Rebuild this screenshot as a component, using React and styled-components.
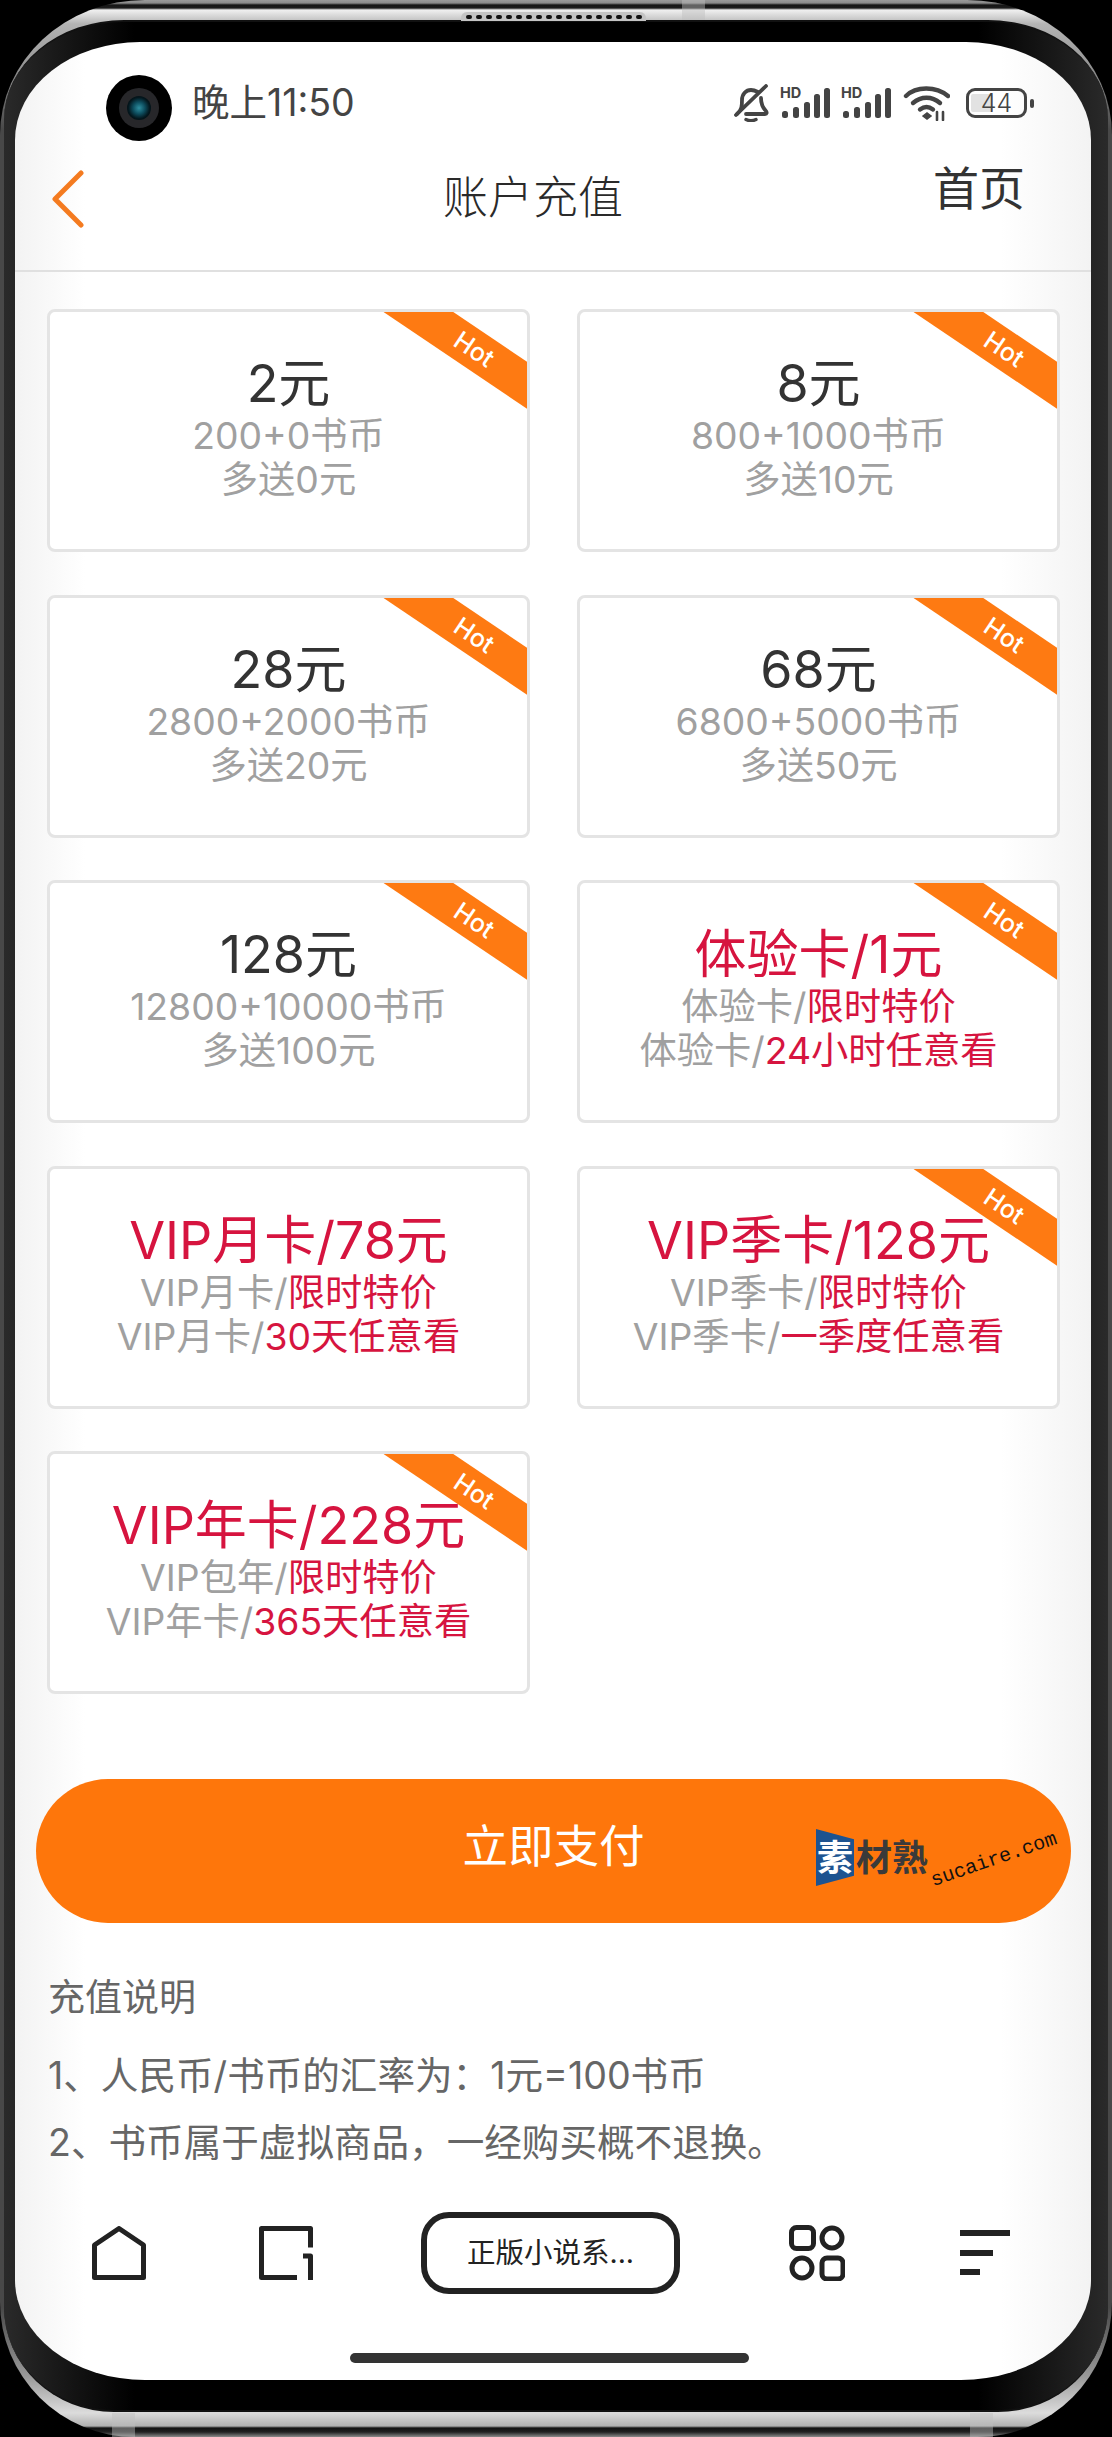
import React from 'react'
import styled, { createGlobalStyle } from 'styled-components'

const GlobalStyle = createGlobalStyle`
  html, body {
    margin: 0;
    padding: 0;
    background: #000;
  }
  * {
    box-sizing: border-box;
  }
  body {
    font-family: "Inter", "Noto Sans CJK SC", sans-serif;
  }
`

const plans = [
  { title: '2元', lines: [[ '200+0书币' ], [ '多送0元' ]], hot: true },
  { title: '8元', lines: [[ '800+1000书币' ], [ '多送10元' ]], hot: true },
  { title: '28元', lines: [[ '2800+2000书币' ], [ '多送20元' ]], hot: true },
  { title: '68元', lines: [[ '6800+5000书币' ], [ '多送50元' ]], hot: true },
  { title: '128元', lines: [[ '12800+10000书币' ], [ '多送100元' ]], hot: true },
  { title: '体验卡/1元', red: true, lines: [[ '体验卡/', '限时特价' ], [ '体验卡/', '24小时任意看' ]], hot: true },
  { title: 'VIP月卡/78元', red: true, lines: [[ 'VIP月卡/', '限时特价' ], [ 'VIP月卡/', '30天任意看' ]], hot: false },
  { title: 'VIP季卡/128元', red: true, lines: [[ 'VIP季卡/', '限时特价' ], [ 'VIP季卡/', '一季度任意看' ]], hot: true },
  { title: 'VIP年卡/228元', red: true, lines: [[ 'VIP包年/', '限时特价' ], [ 'VIP年卡/', '365天任意看' ]], hot: true },
]

const Shell = styled.div`
  position: relative;
  width: 1112px;
  height: 2437px;
  background: #000;
  overflow: hidden;
`

const Rim = styled.div`
  height: 100%;
  padding: 20px 4px 25px;
  border-radius: 145px 145px 135px 135px / 135px 135px 135px 135px;
  background: linear-gradient(
    to bottom,
    #9a9a9a 0,
    #8a8a8a 3px,
    #151515 5px,
    #1c1c1c 8px,
    #f0f0f0 10px,
    #b4b4b4 24px,
    #9a9a9a 60px,
    #484848 130px,
    #484848 calc(100% - 130px),
    #9a9a9a calc(100% - 60px),
    #dcdcdc calc(100% - 24px),
    #b0b0b0 calc(100% - 11px),
    #111 calc(100% - 9px),
    #222 calc(100% - 5px),
    #8a8a8a 100%
  );
`

const Glass = styled.div`
  height: 100%;
  padding: 20px 17px 32px 11px;
  border-top: 2px solid #111;
  border-bottom: 2px solid #111;
  border-radius: 120px 120px 110px 110px / 100px 100px 105px 105px;
  background: linear-gradient(
    to right,
    #2a2a2a 0,
    #000 130px,
    #000 calc(100% - 130px),
    #2a2a2a 100%
  );
`

const Screen = styled.div`
  display: flex;
  flex-direction: column;
  height: calc(100% + 2px);
  border-radius: 125px 125px 130px 130px / 98px 98px 100px 100px;
  background: linear-gradient(
    to right,
    #f3f3f3 0,
    #fff 70px,
    #fff calc(100% - 90px),
    #f3f3f3 100%
  );
  overflow: hidden;
`

const Speaker = styled.div`
  position: absolute;
  top: 12px;
  left: 461px;
  display: flex;
  align-items: center;
  justify-content: center;
  gap: 4px;
  width: 185px;
  height: 9px;
  border-radius: 6px 6px 0 0;
  background: #c4c4c4;
`

const SpeakerDot = styled.span`
  width: 6px;
  height: 4px;
  border-radius: 2px;
  background: #111;
`

const AntennaBand = styled.div`
  position: absolute;
  top: ${(p) => (p.$bottom ? '2413px' : '0')};
  left: ${(p) => p.$left}px;
  width: 23px;
  height: ${(p) => (p.$bottom ? '24px' : '20px')};
  background: rgba(190, 190, 190, 0.45);
`

const StatusBar = styled.div`
  display: flex;
  align-items: center;
  flex: none;
  height: 122px;
  padding: 0 64px 0 91px;
`

const Camera = styled.div`
  display: flex;
  align-items: center;
  justify-content: center;
  width: 66px;
  height: 66px;
  margin-top: 10px;
  border-radius: 50%;
  background: #000;
`

const Lens = styled.div`
  display: flex;
  align-items: center;
  justify-content: center;
  width: 40px;
  height: 40px;
  border-radius: 50%;
  background: #27272a;
`

const LensCore = styled.div`
  width: 24px;
  height: 24px;
  border-radius: 50%;
  background: radial-gradient(circle, #2f8fa0 0, #0d4d5e 35%, #04181f 62%, #000 100%);
`

const Time = styled.div`
  margin-left: 20px;
  color: #444;
  font-size: 37.500px;
  line-height: 44px;
  white-space: nowrap;
`

const StatusIcons = styled.div`
  display: flex;
  align-items: center;
  margin-left: auto;
  gap: 11px;
`

const SignalSvg = styled.svg`
  margin-top: -4px;
  overflow: visible;
`

const Battery = styled.div`
  position: relative;
  display: flex;
  align-items: center;
  justify-content: center;
  width: 61px;
  height: 30px;
  margin-left: 5px;
  border: 3px solid #444;
  border-radius: 9px;
  color: #444;
  font-size: 25px;
  font-weight: 300;
  line-height: 1;

  &::before {
    content: '';
    position: absolute;
    top: 3px;
    left: 2px;
    bottom: 3px;
    width: 22px;
    border-radius: 2px;
    background: #e2e2e2;
  }

  &::after {
    content: '';
    position: absolute;
    top: 8px;
    right: -10px;
    width: 4px;
    height: 9px;
    border-radius: 2px;
    background: #444;
  }
`

const BatteryLevel = styled.span`
  position: relative;
`

const Nav = styled.div`
  display: flex;
  align-items: center;
  flex: none;
  height: 108px;
  padding: 0 66px 36px 37px;
  border-bottom: 2px solid #e0e0e0;
`

const Title = styled.div`
  margin-left: 359px;
  margin-top: -2px;
  color: #2a2a2a;
  font-size: 45px;
  font-weight: 300;
  line-height: 60px;
`

const HomeLink = styled.div`
  margin-left: auto;
  margin-bottom: 22px;
  color: #333;
  font-size: 46px;
  line-height: 60px;
`

const PlanGrid = styled.div`
  display: grid;
  grid-template-columns: 483px 483px;
  grid-auto-rows: 243px;
  column-gap: 47px;
  row-gap: 42.500px;
  flex: none;
  margin: 37px 0 0 32px;
`

const PlanCard = styled.div`
  position: relative;
  padding-top: 42px;
  border: 3px solid #e4e4e4;
  border-radius: 8px;
  background: #fff;
  text-align: center;
  overflow: hidden;
`

const Ribbon = styled.div`
  position: absolute;
  top: 18px;
  right: -57px;
  width: 220px;
  height: 39px;
  background: #fe7a12;
  color: #fff;
  font-size: 25px;
  font-weight: 500;
  line-height: 39px;
  transform: rotate(34deg);
`

const PlanTitle = styled.div`
  color: ${(p) => (p.$red ? '#d6143f' : '#333')};
  font-size: 52px;
  line-height: 60px;
  white-space: nowrap;
`

const PlanLine = styled.div`
  color: #a0a0a0;
  font-size: 37.300px;
  line-height: 44px;
  white-space: nowrap;
`

const PlanAccent = styled.span`
  color: #d6143f;
`

const PayButton = styled.div`
  position: relative;
  display: flex;
  align-items: center;
  justify-content: center;
  flex: none;
  height: 144px;
  margin: 85px 20px 0 21px;
  padding: 0 0 9px 0;
  border-radius: 72px;
  background: #fe760b;
  color: #fff;
  font-size: 45.500px;
  line-height: 60px;
`

const Watermark = styled.div`
  position: absolute;
  top: 50px;
  left: 780px;
  display: flex;
  align-items: center;
  gap: 2px;
`

const WatermarkLogo = styled.div`
  display: flex;
  align-items: center;
  justify-content: center;
  width: 38px;
  height: 57px;
  clip-path: polygon(0 0, 100% 18%, 100% 82%, 0 100%);
  background: #1d5390;
  color: #fff;
  font-size: 36px;
  font-weight: 700;
`

const WatermarkName = styled.div`
  color: #3a3a3a;
  font-size: 36px;
  font-weight: 700;
  line-height: 40px;
  white-space: nowrap;
`

const WatermarkUrl = styled.div`
  position: absolute;
  top: 19px;
  left: 112px;
  color: #111;
  font-family: "Liberation Mono", monospace;
  font-size: 20px;
  line-height: 24px;
  transform: rotate(-19deg);
`

const Notes = styled.div`
  flex: none;
  margin-top: 45px;
  padding-left: 33px;
  color: #666;
  font-size: 37.600px;
`

const NotesTitle = styled.div`
  margin-bottom: 14px;
  font-size: 37px;
  line-height: 60px;
`

const NoteLine = styled.div`
  line-height: 67px;
  white-space: nowrap;
`

const BottomBar = styled.div`
  display: flex;
  align-items: center;
  flex: none;
  height: 82px;
  margin-top: 36px;
  padding-left: 77px;
`

const BarItem = styled.div`
  display: flex;
  flex: none;
  margin-left: ${(p) => p.$gap || 0}px;
`

const TabPill = styled.div`
  display: flex;
  align-items: center;
  justify-content: center;
  width: 259px;
  height: 82px;
  border: 6px solid #222;
  border-radius: 28px;
  color: #222;
  font-size: 28.500px;
  line-height: 40px;
  white-space: nowrap;
`

const HomeIndicator = styled.div`
  flex: none;
  width: 399px;
  height: 10px;
  margin: 59px 0 0 335px;
  border-radius: 5px;
  background: #333;
`

const BellOff = () => (
  <svg width="35" height="38" viewBox="0 0 35 38" fill="none" stroke="#444" strokeWidth="3.800" strokeLinecap="round" strokeLinejoin="round">
    <path d="M3 30c5-4 5-9 5-14 0-6 4-10 9-10 3 0 5 1 7 2" />
    <path d="M27 14c0 5 1 9 5 13 1 1.500 1 3-1 3H12" />
    <path d="M2 31 32 2" />
    <path d="M12 35.500c3 1.500 7 1.500 10 0" strokeWidth="3.400" />
  </svg>
)

const signalBars = [
  { x: 2, h: 7 },
  { x: 13, h: 11 },
  { x: 24, h: 16 },
  { x: 34, h: 24 },
  { x: 44, h: 30 },
]

const Signal = () => (
  <SignalSvg width="50" height="36" viewBox="0 0 50 36">
    <text x="0" y="15" fill="#444" fontFamily="Inter, sans-serif" fontSize="14.500" fontWeight="700">HD</text>
    {signalBars.map((bar) => (
      <rect key={bar.x} x={bar.x} y={35 - bar.h} width="6" height={bar.h} rx="2.500" fill="#444" />
    ))}
  </SignalSvg>
)

const Wifi = () => (
  <svg width="48" height="36" viewBox="0 0 48 36" fill="none" stroke="#444" strokeWidth="4.400" strokeLinecap="round">
    <path d="M4 11C14 1 34 1 46 11" />
    <path d="M11 18c8-7 19-7 27 0" />
    <path d="M18 24.500c4-3 9-3 13 0" />
    <path d="M21 31l4-3 4 3-4 3z" fill="#444" strokeWidth="1.500" />
    <path d="M35 27v8M41 27v8" strokeWidth="2.600" />
  </svg>
)

const BackIcon = () => (
  <svg width="32" height="58" viewBox="0 0 32 58" fill="none" stroke="#f47b20" strokeWidth="5" strokeLinecap="round" strokeLinejoin="round">
    <path d="M29 3 3 29l26 26" />
  </svg>
)

const HomeIcon = () => (
  <svg width="54" height="54" viewBox="0 0 54 54" fill="none" stroke="#222" strokeWidth="5" strokeLinejoin="round">
    <path d="M2.500 19 27 2.500 51.500 19v32.500h-49z" />
  </svg>
)

const TabsIcon = () => (
  <svg width="54" height="54" viewBox="0 0 54 54" fill="none" stroke="#222" strokeWidth="5" strokeLinejoin="round">
    <path d="M38 51.500H2.500v-49h49v19" />
    <path d="M44 30h7.500v24" />
  </svg>
)

const AppsIcon = () => (
  <svg width="56" height="56" viewBox="0 0 56 56" fill="none" stroke="#222" strokeWidth="5">
    <rect x="2.500" y="2.500" width="22" height="21" rx="5" />
    <circle cx="43" cy="13" r="10" />
    <circle cx="13" cy="43" r="10" />
    <rect x="33" y="33" width="21" height="21" rx="5" />
  </svg>
)

const MenuIcon = () => (
  <svg width="50" height="46" viewBox="0 0 50 46" fill="#222">
    <rect x="0" y="0" width="50" height="6" />
    <rect x="0" y="20" width="33" height="6" />
    <rect x="0" y="39" width="20" height="6" />
  </svg>
)

export default function App() {
  return (
    <Shell>
      <GlobalStyle />
      <Rim>
        <Glass>
          <Screen>
            <StatusBar>
              <Camera>
                <Lens>
                  <LensCore />
                </Lens>
              </Camera>
              <Time>晚上11:50</Time>
              <StatusIcons>
                <BellOff />
                <Signal />
                <Signal />
                <Wifi />
                <Battery>
                  <BatteryLevel>44</BatteryLevel>
                </Battery>
              </StatusIcons>
            </StatusBar>
            <Nav>
              <BackIcon />
              <Title>账户充值</Title>
              <HomeLink>首页</HomeLink>
            </Nav>
            <PlanGrid>
              {plans.map((plan) => (
                <PlanCard key={plan.title}>
                  {plan.hot && <Ribbon>Hot</Ribbon>}
                  <PlanTitle $red={plan.red}>{plan.title}</PlanTitle>
                  {plan.lines.map(([plain, accent]) => (
                    <PlanLine key={plain + accent}>
                      {plain}
                      {accent && <PlanAccent>{accent}</PlanAccent>}
                    </PlanLine>
                  ))}
                </PlanCard>
              ))}
            </PlanGrid>
            <PayButton>
              立即支付
              <Watermark>
                <WatermarkLogo>素</WatermarkLogo>
                <WatermarkName>材熟</WatermarkName>
                <WatermarkUrl>sucaire.com</WatermarkUrl>
              </Watermark>
            </PayButton>
            <Notes>
              <NotesTitle>充值说明</NotesTitle>
              <NoteLine>1、人民币/书币的汇率为：1元=100书币</NoteLine>
              <NoteLine>2、书币属于虚拟商品，一经购买概不退换。</NoteLine>
            </Notes>
            <BottomBar>
              <BarItem><HomeIcon /></BarItem>
              <BarItem $gap={113}><TabsIcon /></BarItem>
              <BarItem $gap={108}><TabPill>正版小说系...</TabPill></BarItem>
              <BarItem $gap={109}><AppsIcon /></BarItem>
              <BarItem $gap={115}><MenuIcon /></BarItem>
            </BottomBar>
            <HomeIndicator />
          </Screen>
        </Glass>
      </Rim>
      <Speaker>
        {Array.from({ length: 18 }, (_, i) => (
          <SpeakerDot key={i} />
        ))}
      </Speaker>
      <AntennaBand $left={682} />
      <AntennaBand $left={112} $bottom />
      <AntennaBand $left={970} $bottom />
    </Shell>
  )
}
